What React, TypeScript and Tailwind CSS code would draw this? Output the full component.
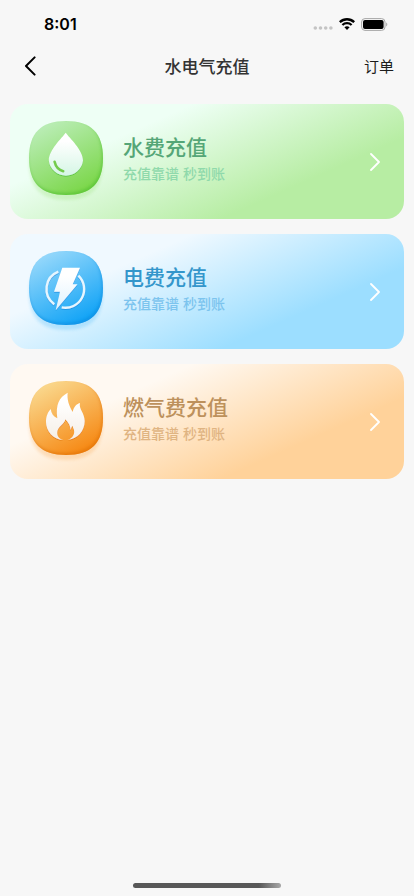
import type { ReactNode } from "react";

type Service = {
  id: string;
  title: string;
  card: string;
  titleColor: string;
  noteColor: string;
  tile: [string, string, string];
  glyph: ReactNode;
};

const TILE =
  "M38 1C63 1 75 13 75 38C75 63 63 75 38 75C13 75 1 63 1 38C1 13 13 1 38 1Z";

const services: Service[] = [
  {
    id: "water",
    title: "水费充值",
    card: "bg-[linear-gradient(156deg,#eefff5_28%,#b7eda3_72%)]",
    titleColor: "text-[#55a677]",
    noteColor: "text-[#8fd9ab]",
    tile: ["#bdeebb", "#7cd74b", "#45b82a"],
    glyph: (
      <>
        <path
          d="M37.7 12.7C41.5 18 55 30 55 40.5A17.2 17 0 0 1 20.8 40.5C20.8 30 34 18 37.7 12.7Z"
          fill="url(#water-glyph)"
        />
        <path
          d="M26.6 41.8C27.6 46.3 30.5 50 35.2 51.2"
          fill="none"
          stroke="#73cb4c"
          strokeWidth="2.6"
          strokeLinecap="round"
        />
      </>
    ),
  },
  {
    id: "power",
    title: "电费充值",
    card: "bg-[linear-gradient(156deg,#f0f9ff_28%,#9cdeff_72%)]",
    titleColor: "text-[#3496cb]",
    noteColor: "text-[#7cc4ee]",
    tile: ["#9bdafb", "#13a4f6", "#0784d8"],
    glyph: (
      <>
        <path
          d="M30.3 21.6A18.7 18.7 0 0 0 26.3 54.2M50.4 25.6A18.7 18.7 0 0 1 33.7 57.4"
          fill="none"
          stroke="#e6f6ff"
          strokeWidth="2.4"
        />
        <path
          d="M34.3 17.7H52L44.7 34.3H49.5L27.7 60.3L32 41.7H26Z"
          fill="url(#power-glyph)"
        />
      </>
    ),
  },
  {
    id: "gas",
    title: "燃气费充值",
    card: "bg-[linear-gradient(156deg,#fff9f2_28%,#ffd29a_72%)]",
    titleColor: "text-[#bd915c]",
    noteColor: "text-[#dfb482]",
    tile: ["#fadb92", "#f68a16", "#d96a06"],
    glyph: (
      <path
        d="M39.7 12.7C39 19 40.5 25 44.8 32C45.5 27.5 48 24 52 23C50.5 29 56.7 33 56.7 41C56.7 51 49.5 59 39.3 60C43 59 46 56 46.2 52C46.3 49 44.8 48 44.6 45.7C43.6 46.6 43.2 48 42.6 50C42.4 46 40.5 42.5 37.3 39.3C37 44 29 46.5 29.2 53C29.3 56.5 31.5 59.2 35.3 60C25 59.5 18 51 18 42C18 36 20 32 22.7 29C23.2 33.5 25.5 36.5 29.3 38.3C27.5 24.5 31 17.5 39.7 12.7Z"
        fill="url(#gas-glyph)"
      />
    ),
  },
];

const glyphEnd: Record<string, string> = {
  water: "#d5f6e5",
  power: "#dff2fe",
  gas: "#f5eee6",
};

const ServiceIcon = ({ service }: { service: Service }) => {
  const { id, tile, glyph } = service;
  const [light, base, dark] = tile;

  return (
    <svg
      className="h-[83px] w-[76px] shrink-0 overflow-visible"
      viewBox="0 0 76 83"
      aria-hidden="true"
    >
      <defs>
        <linearGradient id={`${id}-tile`} x1="0.2" y1="0" x2="0.7" y2="0.95">
          <stop offset="0" stopColor={light} />
          <stop offset="1" stopColor={base} />
        </linearGradient>
        <linearGradient id={`${id}-glyph`} x1="0" y1="0" x2="0" y2="1">
          <stop offset="0.2" stopColor="#ffffff" />
          <stop offset="1" stopColor={glyphEnd[id]} />
        </linearGradient>
        <clipPath id={`${id}-clip`}>
          <path d={TILE} />
        </clipPath>
        <filter id={`${id}-soft`} x="-20%" y="-20%" width="140%" height="140%">
          <feGaussianBlur stdDeviation="1.6" />
        </filter>
        <filter id={`${id}-lift`} x="-20%" y="-20%" width="140%" height="140%">
          <feDropShadow
            dx="0"
            dy="1"
            stdDeviation="0.6"
            floodColor={dark}
            floodOpacity="0.6"
          />
        </filter>
      </defs>
      <path
        d={TILE}
        transform="translate(0 5)"
        fill={base}
        opacity="0.2"
        filter={`url(#${id}-soft)`}
      />
      <path d={TILE} fill={`url(#${id}-tile)`} />
      {/* darker lower right rim */}
      <g clipPath={`url(#${id}-clip)`}>
        <path
          d={`M-10 -10H90V90H-10Z ${TILE}`}
          transform="translate(-1 -2)"
          fill={dark}
          fillRule="evenodd"
          opacity="0.5"
          filter={`url(#${id}-soft)`}
        />
      </g>
      <g filter={`url(#${id}-lift)`}>{glyph}</g>
    </svg>
  );
};

const ServiceCard = ({ service }: { service: Service }) => {
  return (
    <button
      type="button"
      className={`flex h-[115px] w-full items-center rounded-[18px] pl-[18px] pr-6 text-left ${service.card}`}
    >
      <ServiceIcon service={service} />
      <span className="flex grow flex-col pb-1 pl-[19px]">
        <span
          className={`text-[21px] font-medium leading-7 ${service.titleColor}`}
        >
          {service.title}
        </span>
        <span className={`text-sm font-medium leading-6 ${service.noteColor}`}>
          充值靠谱 秒到账
        </span>
      </span>
      <svg
        className="h-[18px] w-[10px]"
        viewBox="0 0 10 18"
        fill="none"
        stroke="white"
        strokeWidth="1.8"
        strokeLinecap="round"
        strokeLinejoin="round"
        aria-hidden="true"
      >
        <path d="M1 1L9 9L1 17" />
      </svg>
    </button>
  );
};

const StatusBar = () => {
  return (
    <div className="flex h-12 items-center justify-between pl-11 pr-[26px]">
      <span className="font-['Inter'] text-base font-semibold text-black">
        8:01
      </span>
      <div className="flex items-center gap-[6px]">
        <svg className="h-[14px] w-5" viewBox="0 0 20 14" fill="#c4c4c4">
          <circle cx="2.3" cy="11" r="1.8" />
          <circle cx="7.5" cy="11" r="1.8" />
          <circle cx="12.7" cy="11" r="1.8" />
          <circle cx="17.9" cy="11" r="1.8" />
        </svg>
        <svg className="h-3 w-4" viewBox="0 0 16 12" fill="none" stroke="black">
          <path d="M0.8 4.2C4.9 0.3 11.1 0.3 15.2 4.2" strokeWidth="2.4" />
          <path d="M3.4 7C6 4.6 10 4.6 12.6 7" strokeWidth="2.3" />
          <path
            d="M8 12L5.4 9.3C7 8 9 8 10.6 9.3Z"
            fill="black"
            stroke="none"
          />
        </svg>
        <svg className="h-[13px] w-[27px]" viewBox="0 0 27 13">
          <rect
            x="0.6"
            y="0.6"
            width="23.4"
            height="11.8"
            rx="3.4"
            fill="none"
            stroke="#a6a6a6"
          />
          <rect x="2" y="2" width="20.6" height="9" rx="2" fill="black" />
          <path d="M25.2 4.6C26.7 5.2 26.7 7.8 25.2 8.4Z" fill="#a6a6a6" />
        </svg>
      </div>
    </div>
  );
};

const App = () => {
  return (
    <main className="flex min-h-screen flex-col bg-[#f7f7f7] font-['Liberation_Sans','Noto_Sans_CJK_SC',sans-serif]">
      <StatusBar />
      <header className="grid h-9 grid-cols-[1fr_auto_1fr] items-center px-5">
        <button
          type="button"
          aria-label="返回"
          className="flex h-9 w-6 items-center pl-1"
        >
          <svg
            className="h-5 w-3"
            viewBox="0 0 12 20"
            fill="none"
            stroke="black"
            strokeWidth="2"
            strokeLinecap="round"
            strokeLinejoin="round"
          >
            <path d="M10.6 1.4L2 10L10.6 18.6" />
          </svg>
        </button>
        <h1 className="pt-1 text-[17px] font-medium leading-6 text-[#333333]">
          水电气充值
        </h1>
        <button
          type="button"
          className="justify-self-end pt-[2px] text-[15px] leading-6 text-[#1c1c1c]"
        >
          订单
        </button>
      </header>

      <section className="flex grow flex-col gap-[15px] px-[10px] pt-5">
        {services.map((service) => (
          <ServiceCard key={service.id} service={service} />
        ))}
      </section>

      <div className="flex justify-center pb-2">
        <div className="h-[5px] w-[148px] rounded-full bg-[linear-gradient(90deg,#585858_85%,#a8a8a8)]" />
      </div>
    </main>
  );
};

export default App;
